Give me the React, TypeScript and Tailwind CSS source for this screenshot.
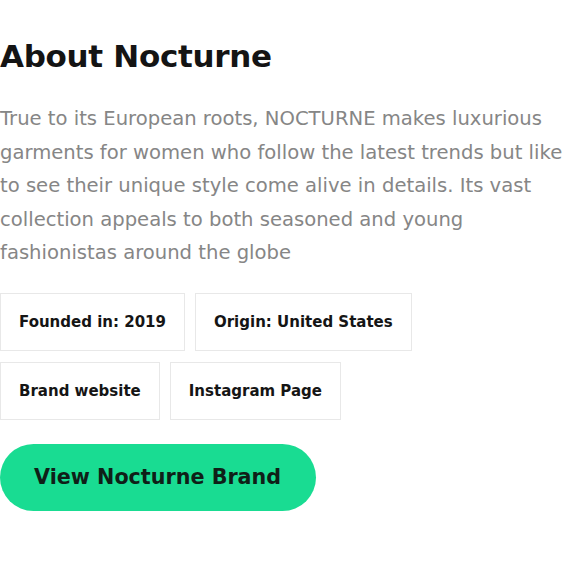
const FACTS = [
  ['Founded in: 2019', 'Origin: United States'],
  ['Brand website', 'Instagram Page'],
]

const DESCRIPTION = [
  'True to its European roots, NOCTURNE makes luxurious',
  'garments for women who follow the latest trends but like',
  'to see their unique style come alive in details. Its vast',
  'collection appeals to both seasoned and young',
  'fashionistas around the globe',
]

export default function App() {
  return (
    <div className="w-[580px] h-[580px] bg-white font-['DejaVu_Sans',sans-serif]">
      <section className="pt-[36px]">
        {/* Heading */}
        <h2 className="text-[31px] leading-[40px] font-bold text-[#141414] tracking-[-0.3px]">
          About Nocturne
        </h2>

        {/* Description */}
        <p className="mt-[26px] text-[19.6px] leading-[33.6px] text-[#868686] whitespace-nowrap">
          {DESCRIPTION.map((line) => (
            <span key={line} className="block">
              {line}
            </span>
          ))}
        </p>

        {/* Facts */}
        <div className="mt-[23px] flex flex-col gap-[11px]">
          {FACTS.map((row, i) => (
            <div key={i} className="flex gap-[10px]">
              {row.map((fact) => (
                <div
                  key={fact}
                  className="h-[58px] px-[18px] flex items-center border border-[#e8e8e8] text-[15px] font-bold text-[#151515]"
                >
                  {fact}
                </div>
              ))}
            </div>
          ))}
        </div>

        {/* CTA */}
        <button className="mt-[24px] h-[67px] pl-[34px] pr-[35px] rounded-full bg-[#19dc92] text-[20.7px] font-bold text-[#0f1f18]">
          View Nocturne Brand
        </button>
      </section>
    </div>
  )
}
